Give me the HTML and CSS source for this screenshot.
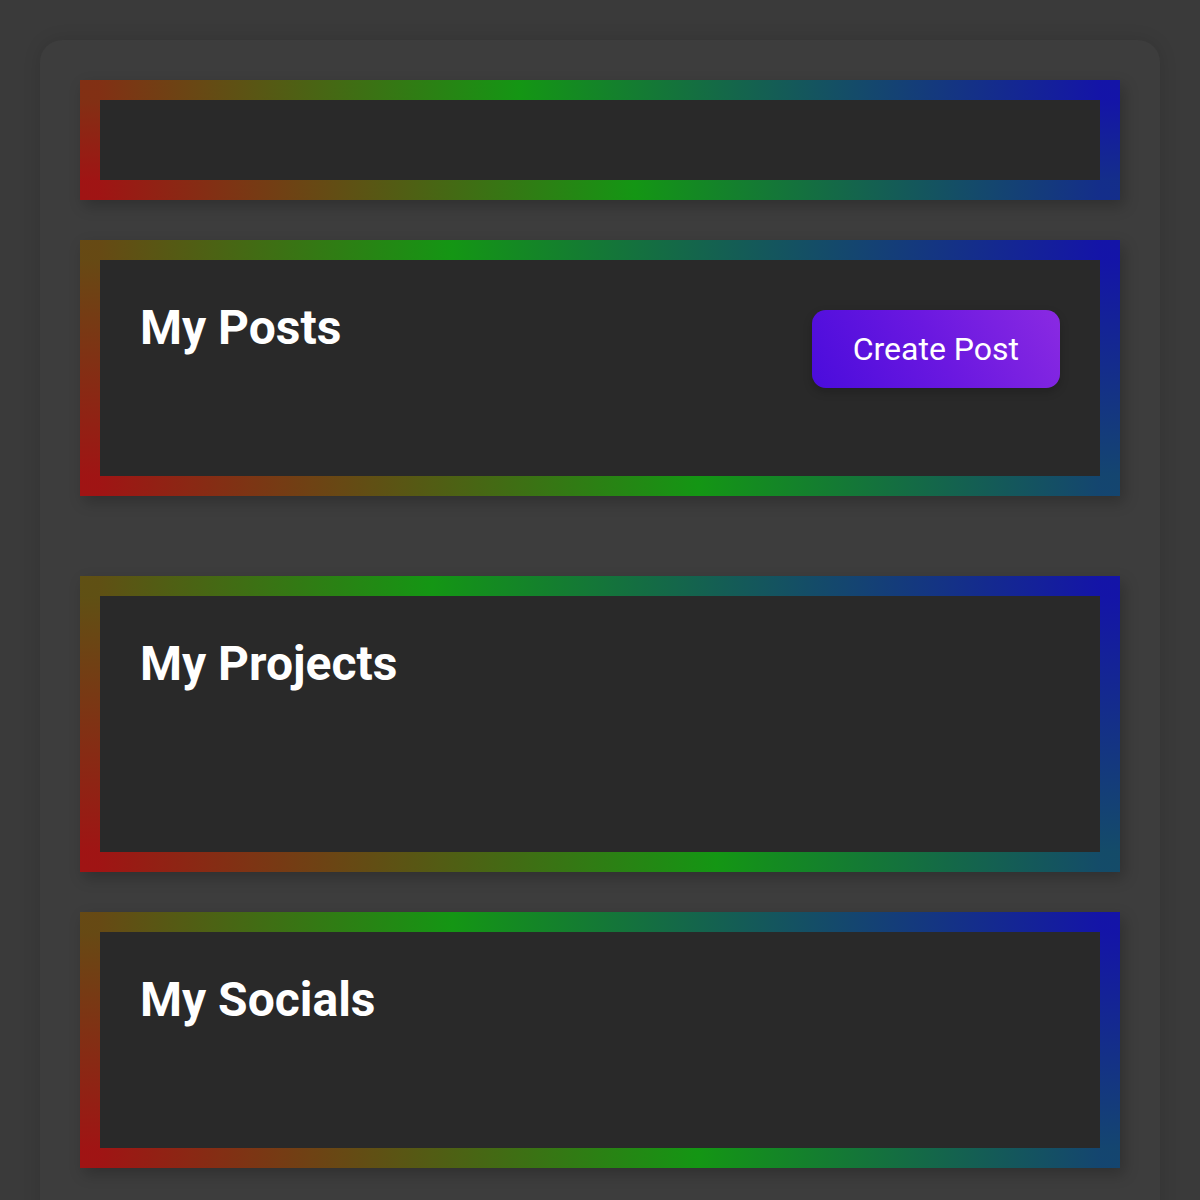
FILE: index.html
```html
<!DOCTYPE html>
<html lang="en">
<head>
<meta charset="utf-8">
<title>Dashboard</title>
<link rel="stylesheet" href="styles.css">
</head>
<body>
<main class="page">
  <section class="card card-top"></section>
  <section class="card card-posts">
    <div class="card-head">
      <h2 class="card-title">My Posts</h2>
      <button class="btn-create">Create Post</button>
    </div>
  </section>
  <section class="card card-projects">
    <h2 class="card-title">My Projects</h2>
  </section>
  <section class="card card-socials">
    <h2 class="card-title">My Socials</h2>
  </section>
</main>
</body>
</html>
```
FILE: styles.css
```css
html, body {
  margin: 0;
  padding: 0;
}
body {
  background: #3a3a3a;
  font-family: Roboto, "Liberation Sans", sans-serif;
  padding: 40px;
}
.page {
  background: #3d3d3d;
  border-radius: 22px;
  box-shadow: 0 0 18px rgba(0, 0, 0, 0.12);
  padding: 40px;
  display: flex;
  flex-direction: column;
}
.card {
  background: #292929;
  border: 20px solid transparent;
  border-image: linear-gradient(45deg, #a01414 0%, #149614 48%, #1414a8 100%) 1;
  padding: 40px;
  box-shadow: 4px 6px 14px rgba(0, 0, 0, 0.22);
  margin-bottom: 40px;
}
.card-top {
  height: 0;
}
.card-posts {
  height: 136px;
  margin-bottom: 80px;
}
.card-projects {
  height: 176px;
}
.card-socials {
  height: 136px;
}
.card-head {
  display: flex;
  justify-content: space-between;
  align-items: flex-start;
}
.card-title {
  margin: 0;
  color: #ffffff;
  font-size: 48px;
  font-weight: 700;
  line-height: 56px;
}
.btn-create {
  margin-top: 10px;
  font-family: Roboto, "Liberation Sans", sans-serif;
  font-size: 32px;
  line-height: 38px;
  color: #ffffff;
  padding: 20px 41px;
  border: none;
  border-radius: 14px;
  background: linear-gradient(60deg, #4a0cdc 0%, #6a18e0 50%, #8a2ae2 100%);
  box-shadow: 0 4px 10px rgba(0, 0, 0, 0.2);
}
```
